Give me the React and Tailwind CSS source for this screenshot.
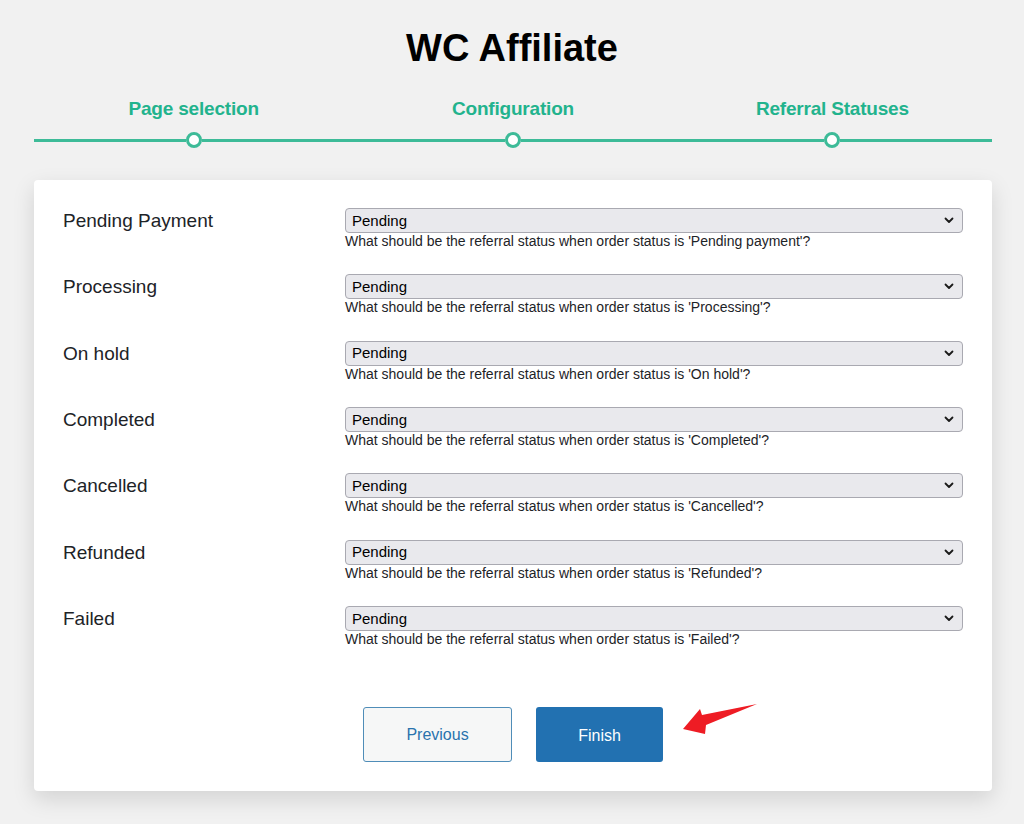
import React, { useState } from 'react';

const STEPS = ['Page selection', 'Configuration', 'Referral Statuses'];

const STATUSES = [
  { label: 'Pending Payment', status: 'Pending payment' },
  { label: 'Processing', status: 'Processing' },
  { label: 'On hold', status: 'On hold' },
  { label: 'Completed', status: 'Completed' },
  { label: 'Cancelled', status: 'Cancelled' },
  { label: 'Refunded', status: 'Refunded' },
  { label: 'Failed', status: 'Failed' },
];

const OPTIONS = ['Pending', 'Approved', 'Rejected', 'Paid'];

const StatusRow = ({ label, status, value, onChange }) => (
  <div className="flex">
    <div className="w-[282px] pt-[1px] text-[19px] leading-[24px] text-[#1d2327]">{label}</div>
    <div className="flex-1">
      <div className="relative">
        <select
          value={value}
          onChange={onChange}
          className="block w-full h-[25px] appearance-none rounded-[4px] border border-[#a9a9b1] bg-[#e9e9ed] pl-[6px] pr-8 text-[15px] leading-[22px] text-black outline-none"
        >
          {OPTIONS.map((opt) => (
            <option key={opt} value={opt}>
              {opt}
            </option>
          ))}
        </select>
        <svg
          className="pointer-events-none absolute right-[9px] top-[9px]"
          width="10"
          height="8"
          viewBox="0 0 10 8"
          fill="none"
        >
          <path d="M1.5 1.5 L5 5 L8.5 1.5" stroke="#1a1a1a" strokeWidth="1.8" strokeLinecap="round" strokeLinejoin="round" />
        </svg>
      </div>
      <p className="text-[14px] leading-[16px] text-[#1d2327]">
        What should be the referral status when order status is '{status}'?
      </p>
    </div>
  </div>
);

const App = () => {
  const [values, setValues] = useState(
    STATUSES.reduce((acc, s) => ({ ...acc, [s.label]: 'Pending' }), {})
  );

  const handleChange = (label) => (e) => {
    const { value } = e.target;
    setValues((prev) => ({ ...prev, [label]: value }));
  };

  return (
    <div className="min-h-screen bg-[#f1f1f1] pt-[26px] pb-10 font-['Liberation_Sans',Arial,sans-serif]">
      <h1 className="text-center text-[38px] leading-[44px] font-bold text-black">WC Affiliate</h1>

      <div className="ml-[34px] mt-[28px] w-[958px]">
        {/* steps */}
        <div className="grid grid-cols-3">
          {STEPS.map((step) => (
            <div key={step} className="flex flex-col">
              <div className="text-center text-[19px] leading-[22px] font-bold text-[#22b38d] tracking-[-0.2px]">
                {step}
              </div>
              <div className="mt-[12px] flex items-center">
                <div className="h-[3px] flex-1 bg-[#3dbb98]"></div>
                <div className="h-[16px] w-[16px] rounded-full border-[3px] border-[#3dbb98] bg-white"></div>
                <div className="h-[3px] flex-1 bg-[#3dbb98]"></div>
              </div>
            </div>
          ))}
        </div>

        {/* card */}
        <div className="mt-[32px] rounded-[4px] bg-white px-[29px] pt-[28px] pb-[29px] shadow-[0_8px_22px_rgba(0,0,0,0.13)]">
          <div className="flex flex-col gap-[25.35px]">
            {STATUSES.map((s) => (
              <StatusRow
                key={s.label}
                label={s.label}
                status={s.status}
                value={values[s.label]}
                onChange={handleChange(s.label)}
              />
            ))}
          </div>

          <div className="mt-[60px] flex justify-center gap-[24px]">
            <button
              type="button"
              className="h-[55px] w-[149px] rounded-[3px] border border-[#4f8db8] bg-[#f6f7f7] text-[16px] text-[#2a73ad]"
            >
              Previous
            </button>
            <span className="relative">
              <button
                type="button"
                className="h-[55px] w-[127px] rounded-[3px] bg-[#2271b1] pt-[3px] text-[16px] text-white"
              >
                Finish
              </button>
              <svg
                className="absolute left-[147px] top-[-4px]"
                width="76"
                height="34"
                viewBox="0 0 76 34"
              >
                <polygon points="0,26 17,6 19,12 74,1 23,22 22,31" fill="#ee1c24" />
              </svg>
            </span>
          </div>
        </div>
      </div>
    </div>
  );
};

export default App;
